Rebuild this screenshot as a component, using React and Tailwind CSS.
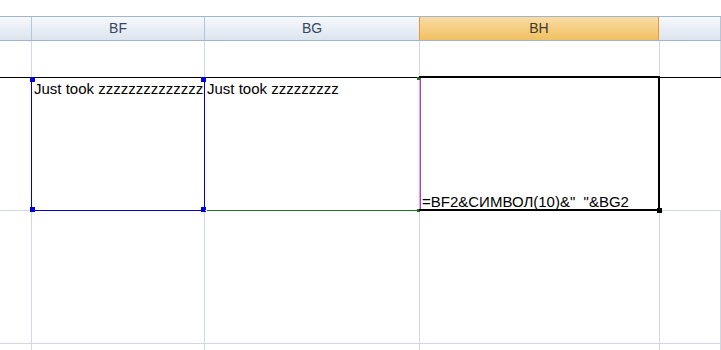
import React from 'react'

const COLS = [
  { key: 'A', label: '', w: 'w-[32px]' },
  { key: 'BF', label: 'BF', w: 'w-[173px]' },
  { key: 'BG', label: 'BG', w: 'w-[215px]' },
  { key: 'BH', label: 'BH', w: 'w-[240px]', active: true },
  { key: 'BI', label: '', w: 'flex-1' },
]

function Handle({ className }) {
  return <div className={'absolute ' + className} />
}

export default function App() {
  return (
    <div className="w-[721px] h-[350px] bg-white overflow-hidden font-['Liberation_Sans',Arial,sans-serif] text-black">
      <div className="h-[16px]" />

      {/* column headers */}
      <div className="flex h-[25px] border-t border-b border-[#9eb6ce] bg-gradient-to-b from-[#f6f9fc] to-[#dce4ef]">
        {COLS.map((c) =>
          c.active ? (
            <div
              key={c.key}
              className={`${c.w} border-x border-[#f29536] -ml-px bg-gradient-to-b from-[#f9dba4] to-[#f1c15f] flex items-center justify-center text-[14px] text-[#3f3a2a]`}
            >
              {c.label}
            </div>
          ) : (
            <div
              key={c.key}
              className={`${c.w} border-r border-[#b5c6d8] flex items-center justify-center text-[14px] text-[#34475f]`}
            >
              {c.label}
            </div>
          )
        )}
      </div>

      {/* row 1 */}
      <div className="flex h-[36px]">
        {COLS.map((c) => (
          <div key={c.key} className={`${c.w} border-r border-[#d0d7e5]`} />
        ))}
      </div>

      {/* row 2 */}
      <div className="flex h-[134px] border-t border-black text-[15px] leading-[17px]">
        <div className="w-[32px] border-r border-b border-[#d0d7e5]" />

        <div className="w-[173px] relative border-r border-b border-[#d0d7e5] overflow-visible">
          <p className="overflow-hidden whitespace-nowrap pl-[2px] pt-[2px]">Just took zzzzzzzzzzzzzzz</p>
          <div className="absolute -left-px -top-px -right-px -bottom-px border-x border-b border-[#0000c8] border-t border-t-black" />
          <Handle className="left-[-2px] top-[-1px] w-[5px] h-[5px] bg-[#0000e0]" />
          <Handle className="right-[-2px] top-[-1px] w-[5px] h-[5px] bg-[#0000e0]" />
          <Handle className="left-[-2px] bottom-[-2px] w-[5px] h-[5px] bg-[#0000e0]" />
          <Handle className="right-[-2px] bottom-[-2px] w-[5px] h-[5px] bg-[#0000e0]" />
        </div>

        <div className="w-[215px] relative border-r border-b border-[#d0d7e5]">
          <p className="overflow-hidden whitespace-nowrap pl-[2px] pt-[2px]">Just took zzzzzzzzz</p>
          <div className="absolute left-[2px] right-0 -bottom-px h-px bg-[#1f7a1f]" />
          <div className="absolute right-[-2px] top-0 bottom-0 w-px bg-[#b040b0]" />
          <div className="absolute -right-px top-0 -bottom-px w-px bg-[#f0a0f0]" />
          <Handle className="-right-px -top-px w-[3px] h-[3px] bg-[#1f6f1f]" />
          <Handle className="-right-px bottom-[-2px] w-[3px] h-[3px] bg-[#1f6f1f]" />
        </div>

        <div className="w-[240px] relative flex items-end border-r border-b border-[#d0d7e5]">
          <p className="overflow-hidden whitespace-nowrap pl-[2px]">
            =BF2&amp;СИМВОЛ(10)&amp;"&nbsp;&nbsp;"&amp;BG2
          </p>
          <div className="absolute -left-px top-[-2px] -right-px -bottom-px border-t-2 border-r-2 border-b-2 border-black" />
          <Handle className="right-[-3px] bottom-[-3px] w-[5px] h-[5px] bg-black" />
        </div>

        <div className="flex-1 border-b border-[#d0d7e5]" />
      </div>

      {/* row 3 */}
      <div className="flex h-[133px]">
        {COLS.map((c) => (
          <div key={c.key} className={`${c.w} border-r border-b border-[#d0d7e5]`} />
        ))}
      </div>

      {/* row 4 */}
      <div className="flex h-[20px]">
        {COLS.map((c) => (
          <div key={c.key} className={`${c.w} border-r border-[#d0d7e5]`} />
        ))}
      </div>
    </div>
  )
}
